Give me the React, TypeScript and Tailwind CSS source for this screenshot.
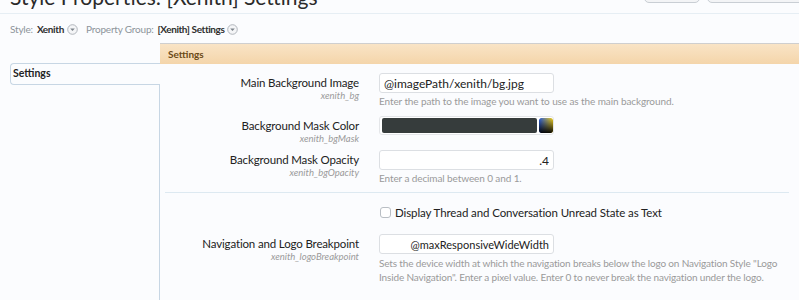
import type { ReactNode } from "react";

// small circled arrow used next to the breadcrumb items
const DropCircle = () => (
  <svg width="11" height="11" viewBox="0 0 11 11" className="ml-[3px] shrink-0">
    <circle cx="5.5" cy="5.5" r="4.8" fill="#f4f5f7" stroke="#a9afb6" strokeWidth="0.9" />
    <path d="M3.2 4.4 L7.8 4.4 L5.5 7 Z" fill="#7d848c" />
  </svg>
);

const PickerIcon = () => (
  <svg width="14" height="15" viewBox="0 0 14 15" className="shrink-0 rounded-[2px]">
    <defs>
      <linearGradient id="hue" x1="0" y1="0" x2="1" y2="0">
        <stop offset="0" stopColor="#2b5fe0" />
        <stop offset="1" stopColor="#f5d21a" />
      </linearGradient>
      <linearGradient id="dark" x1="0" y1="0" x2="0" y2="1">
        <stop offset="0" stopColor="#000" stopOpacity="0" />
        <stop offset="1" stopColor="#000" stopOpacity="0.95" />
      </linearGradient>
    </defs>
    <rect width="14" height="15" rx="2" fill="url(#hue)" />
    <rect width="14" height="15" rx="2" fill="url(#dark)" />
  </svg>
);

function Row({
  label,
  sub,
  children,
  className = "",
}: {
  label: string;
  sub: string;
  children: ReactNode;
  className?: string;
}) {
  return (
    <div className={`flex ${className}`}>
      <div className="w-[199px] shrink-0 pt-[2px] text-right">
        <div className="text-[11.5px] leading-[15px] tracking-[-0.15px] text-[#222]">{label}</div>
        <div className="text-[9.5px] italic leading-[11px] text-[#9a9a9a]">{sub}</div>
      </div>
      <div className="ml-[20px] flex-1">{children}</div>
    </div>
  );
}

const inputCls =
  "block h-[20px] w-[175px] rounded-[3px] border border-[#dcdfe3] bg-white px-[4px] leading-[18px] text-[#222]";

const helpCls = "mt-[2px] text-[10px] leading-[13px] tracking-[-0.1px] text-[#9a9a9a]";

export default function App() {
  return (
    <div className="h-[300px] w-[799px] overflow-hidden bg-[#fbfcfe] font-['Lato',sans-serif] text-[#222]">
      {/* title strip, cut off at the top */}
      <div className="flex h-[14px] items-start justify-between overflow-hidden border-b border-[#e6eef4] pl-[10px]">
        <h1 className="-mt-[16px] text-[21px] leading-[25px] text-[#2a2a2a]">
          Style Properties: [Xenith] Settings
        </h1>
        <div className="flex gap-[7px]">
          <div className="-mt-[10px] h-[13px] w-[56px] rounded-[5px] border border-[#c9ced4] bg-[#f3f4f6]" />
          <div className="-mr-[10px] -mt-[10px] h-[13px] w-[102px] rounded-[5px] border border-[#c9ced4] bg-[#f3f4f6]" />
        </div>
      </div>

      {/* breadcrumb */}
      <div className="mt-[8px] flex h-[14px] items-center pl-[10px] text-[10px] leading-[14px] tracking-[-0.2px]">
        <span className="text-[#8d949b]">Style:</span>
        <span className="ml-[4px] font-bold tracking-[-0.35px] text-[#2f2f2f]">Xenith</span>
        <DropCircle />
        <span className="ml-[8px] text-[#8d949b]">Property Group:</span>
        <span className="ml-[4px] font-bold tracking-[-0.4px] text-[#2f2f2f]">[Xenith] Settings</span>
        <DropCircle />
      </div>

      <div className="mt-[7px] flex">
        {/* sidebar */}
        <div className="ml-[10px] flex w-[150px] shrink-0 flex-col">
          <div className="mt-[20px] flex h-[22px] items-center rounded-l-[4px] border border-r-0 border-[#c7d6e4] bg-[#fbfcfe] pl-[2px] text-[10.5px] font-bold text-[#222]">
            Settings
          </div>
          <div className="h-[220px] border-r border-[#c7d6e4]" />
        </div>

        {/* content */}
        <div className="flex-1">
          <div className="flex h-[21px] items-center border-t border-[#cfcfcf] bg-gradient-to-b from-[#f9e4c6] to-[#f4d5aa] pl-[8px] text-[10px] font-bold text-[#6b4a17]">
            Settings
          </div>

          <Row label="Main Background Image" sub="xenith_bg" className="mt-[9px]">
            <input className={`${inputCls} text-[12px]`} readOnly value="@imagePath/xenith/bg.jpg" />
            <div className={helpCls}>
              Enter the path to the image you want to use as the main background.
            </div>
          </Row>

          <Row label="Background Mask Color" sub="xenith_bgMask" className="mt-[8px]">
            <div className="flex h-[19px] w-[175px] items-center gap-[2px] rounded-[3px] border border-[#e4e6e9] bg-white pl-[2px]">
              <div className="h-[15px] w-[155px] rounded-[2px] bg-[#363c3c]" />
              <PickerIcon />
            </div>
          </Row>

          <Row label="Background Mask Opacity" sub="xenith_bgOpacity" className="mt-[6px]">
            <input className={`${inputCls} text-right text-[12px]`} readOnly value=".4" />
            <div className={helpCls}>Enter a decimal between 0 and 1.</div>
          </Row>

          <div className="ml-[5px] mr-[10px] mt-[7px] border-t border-[#dde9f1]" />

          <div className="mt-[11px] flex h-[16px] items-center pl-[220px]">
            <span className="h-[11px] w-[11px] rounded-[3px] border border-[#b9bec4] bg-white" />
            <span className="ml-[4px] text-[11.5px] leading-[15px] tracking-[-0.1px] text-[#222]">
              Display Thread and Conversation Unread State as Text
            </span>
          </div>

          <Row label="Navigation and Logo Breakpoint" sub="xenith_logoBreakpoint" className="mt-[14px]">
            <input className={`${inputCls} text-right text-[11px]`} readOnly value="@maxResponsiveWideWidth" />
            <div className="mt-[2px] w-[410px] text-[10px] leading-[14px] tracking-[-0.15px] text-[#9a9a9a]">
              Sets the device width at which the navigation breaks below the logo on Navigation Style "Logo Inside Navigation". Enter a pixel value. Enter 0 to never break the navigation under the logo.
            </div>
          </Row>
        </div>
      </div>
    </div>
  );
}
